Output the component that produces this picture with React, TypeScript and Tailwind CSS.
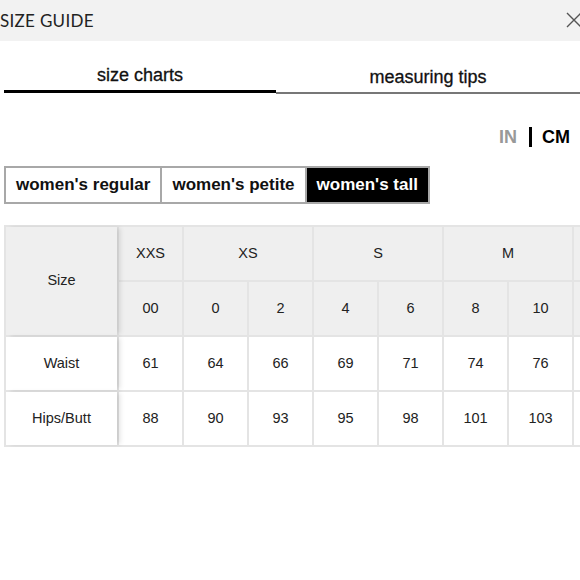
import { useState } from 'react'

type Group = { label: string; sizes: { num: string; waist: string; hips: string }[] }

const groups: Group[] = [
  { label: 'XXS', sizes: [{ num: '00', waist: '61', hips: '88' }] },
  {
    label: 'XS',
    sizes: [
      { num: '0', waist: '64', hips: '90' },
      { num: '2', waist: '66', hips: '93' },
    ],
  },
  {
    label: 'S',
    sizes: [
      { num: '4', waist: '69', hips: '95' },
      { num: '6', waist: '71', hips: '98' },
    ],
  },
  {
    label: 'M',
    sizes: [
      { num: '8', waist: '74', hips: '101' },
      { num: '10', waist: '76', hips: '103' },
    ],
  },
]

const fits = ["women's regular", "women's petite", "women's tall"]

function CloseIcon() {
  return (
    <svg width="16" height="16" viewBox="0 0 16 16" fill="none" stroke="#555" strokeWidth="1.4">
      <path d="M1 1 L15 15 M15 1 L1 15" />
    </svg>
  )
}

export default function App() {
  const [tab, setTab] = useState(0)
  const [fit, setFit] = useState(2)
  const [unit, setUnit] = useState<'in' | 'cm'>('cm')

  const sizes = groups.flatMap((g) => g.sizes)

  return (
    <div className="w-[580px] h-[580px] overflow-hidden bg-white text-[#222] font-['Liberation_Sans',Arial,sans-serif]">
      {/* Header */}
      <div className="h-[41px] bg-[#f2f2f2] flex items-center justify-between">
        <span className="text-[17px] tracking-[0.3px] text-[#222] font-['Lato',sans-serif] leading-none">
          SIZE GUIDE
        </span>
        <button className="mr-[-2px] mt-[-2px]">
          <CloseIcon />
        </button>
      </div>

      {/* Tabs */}
      <div className="flex ml-[4px] mt-[22px]">
        {['size charts', 'measuring tips'].map((t, i) => (
          <button
            key={t}
            onClick={() => setTab(i)}
            className={
              i === 0
                ? 'w-[272px] h-[30px] text-[18px] text-[#111] [-webkit-text-stroke:0.3px_#111] ' +
                  (tab === i ? 'border-b-[3px] border-black' : 'border-b-[2px] border-[#777] mt-[1px]')
                : 'flex-1 h-[30px] text-[18px] text-[#111] [-webkit-text-stroke:0.3px_#111] ' +
                  (tab === i ? 'border-b-[3px] border-black' : 'border-b-[2px] border-[#777] mt-[1px]')
            }
          >
            <span className="relative top-[-1px]">{t}</span>
          </button>
        ))}
      </div>

      {/* Units */}
      <div className="flex justify-end items-center mt-[31px] pr-[10px] h-[24px] text-[18px] font-bold">
        <button onClick={() => setUnit('in')} className={unit === 'in' ? 'text-black' : 'text-[#999]'}>
          IN
        </button>
        <span className="w-[3px] h-[20px] bg-black ml-[12px] mr-[10px]" />
        <button onClick={() => setUnit('cm')} className={unit === 'cm' ? 'text-black' : 'text-[#999]'}>
          CM
        </button>
      </div>

      {/* Fit selector */}
      <div className="flex ml-[4px] mt-[17px]">
        {fits.map((f, i) => (
          <button
            key={f}
            onClick={() => setFit(i)}
            className={
              'h-[38px] px-[10px] text-[17px] font-bold border-[2px] border-[#a8a8a8] ' +
              (i > 0 ? 'ml-[-2px] ' : '') +
              (fit === i ? 'bg-black text-white border-[#777]' : 'bg-white text-[#111]')
            }
          >
            {f}
          </button>
        ))}
      </div>

      {/* Size table, clipped at the right like a horizontal scroller */}
      <div className="mt-[21px] ml-[4px] w-[576px] overflow-hidden">
        <div className="w-max grid grid-cols-[111px_repeat(8,63px)] grid-rows-[53px_53px_53px_53px] gap-[2px] p-[2px] bg-[#e4e4e4] text-[14.5px] text-[#222]">
          <div className="row-span-2 bg-[#efefef] flex items-center justify-center relative z-10 shadow-[4px_0_5px_-1px_rgba(0,0,0,0.12)]">
            Size
          </div>
          {groups.map((g) => (
            <div
              key={g.label}
              className={
                'bg-[#efefef] flex items-center justify-center ' + (g.sizes.length === 2 ? 'col-span-2' : '')
              }
            >
              {g.label}
            </div>
          ))}
          <div className="bg-[#efefef]" />
          {sizes.map((s) => (
            <div key={'n' + s.num} className="bg-[#efefef] flex items-center justify-center">
              {s.num}
            </div>
          ))}
          <div className="bg-[#efefef]" />
          <div className="bg-white flex items-center justify-center relative z-10 shadow-[4px_0_5px_-1px_rgba(0,0,0,0.12)]">
            Waist
          </div>
          {sizes.map((s) => (
            <div key={'w' + s.num} className="bg-white flex items-center justify-center">
              {s.waist}
            </div>
          ))}
          <div className="bg-white" />
          <div className="bg-white flex items-center justify-center relative z-10 shadow-[4px_0_5px_-1px_rgba(0,0,0,0.12)]">
            Hips/Butt
          </div>
          {sizes.map((s) => (
            <div key={'h' + s.num} className="bg-white flex items-center justify-center">
              {s.hips}
            </div>
          ))}
          <div className="bg-white" />
        </div>
      </div>
    </div>
  )
}
